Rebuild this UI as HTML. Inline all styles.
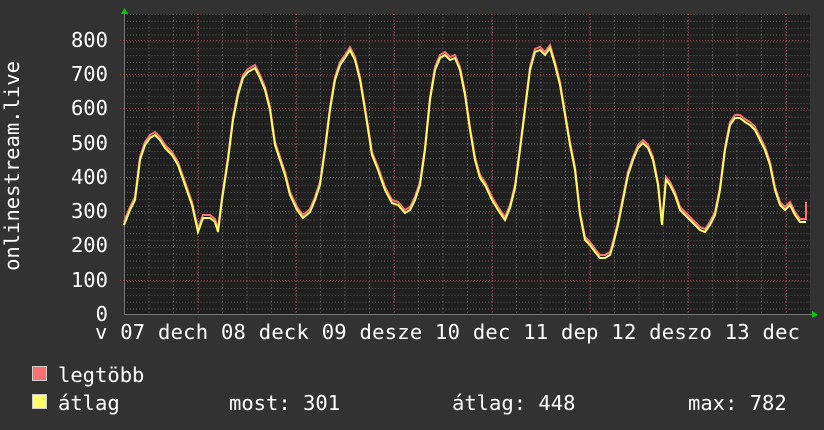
<!DOCTYPE html><html><head><style>body{margin:0;background:#323232}svg{display:block}text{font-family:"DejaVu Sans Mono","Liberation Mono",monospace;fill:#fff}</style></head><body>
<svg width="824" height="430" xmlns="http://www.w3.org/2000/svg">
<defs>
<pattern id="minor" x="124" y="14" width="24.5" height="6.85" patternUnits="userSpaceOnUse">
<line x1="0.5" y1="0" x2="0.5" y2="6.85" stroke="#666" stroke-width="1" stroke-dasharray="1,2"/>
<line x1="0" y1="0.5" x2="24.5" y2="0.5" stroke="#555" stroke-width="1" stroke-dasharray="1,2"/>
</pattern>
</defs>
<rect x="0" y="0" width="824" height="430" fill="#323232"/>
<rect x="124" y="14" width="686" height="300" fill="#1f1f1f"/>
<rect x="124" y="14" width="686" height="300" fill="url(#minor)"/>
<g stroke="#8a3a3a" stroke-dasharray="1,2">
<line x1="198.5" y1="14" x2="198.5" y2="318"/><line x1="296.5" y1="14" x2="296.5" y2="318"/><line x1="394.5" y1="14" x2="394.5" y2="318"/><line x1="492.5" y1="14" x2="492.5" y2="318"/><line x1="590.5" y1="14" x2="590.5" y2="318"/><line x1="688.5" y1="14" x2="688.5" y2="318"/><line x1="786.5" y1="14" x2="786.5" y2="318"/>
<line x1="120" y1="40.5" x2="810" y2="40.5"/><line x1="120" y1="74.5" x2="810" y2="74.5"/><line x1="120" y1="108.5" x2="810" y2="108.5"/><line x1="120" y1="143.5" x2="810" y2="143.5"/><line x1="120" y1="177.5" x2="810" y2="177.5"/><line x1="120" y1="211.5" x2="810" y2="211.5"/><line x1="120" y1="245.5" x2="810" y2="245.5"/><line x1="120" y1="280.5" x2="810" y2="280.5"/>
</g>
<line x1="124" y1="314.5" x2="816" y2="314.5" stroke="#777"/>
<line x1="124.5" y1="10" x2="124.5" y2="314" stroke="#777"/>
<polygon points="121,14 128,14 124.5,8" fill="#0c0"/>
<polygon points="812,311 812,318 818,314.5" fill="#0c0"/>
<g fill="none" stroke-width="2" stroke-linejoin="miter">
<polyline transform="translate(0,-3)" stroke="#ff7070" points="124,225 130,210 135,200 140,160 145,145 150,138 155,135 160,140 165,148 172,155 178,165 185,185 192,205 198,232 203,218 210,218 215,222 218,232 222,200 228,160 233,120 238,95 243,78 248,72 255,68 260,78 265,90 270,110 275,145 280,160 285,175 290,195 297,210 303,218 310,212 315,200 320,185 325,150 330,110 335,80 340,65 345,58 350,50 355,60 360,80 365,110 372,155 378,170 385,190 392,203 398,205 405,213 410,210 415,200 420,185 425,150 430,100 435,70 440,58 445,55 450,60 455,58 460,70 465,95 470,130 475,160 480,178 485,185 492,200 498,210 505,220 510,208 515,188 520,150 525,110 530,70 535,52 540,50 545,55 550,48 555,65 560,85 565,115 570,145 575,170 580,215 585,240 590,245 595,252 600,258 605,258 610,255 613,245 618,225 623,200 628,175 633,160 638,148 643,143 648,148 653,160 658,185 662,225 666,180 670,185 675,195 680,210 688,218 695,225 700,230 705,232 710,225 715,215 720,190 725,150 730,125 735,118 740,118 745,122 750,125 755,130 760,140 765,150 770,165 775,190 780,205 785,210 790,205 795,215 800,222 806,222 806,205"/>
<polyline stroke="#ffff66" points="124,225 130,210 135,200 140,160 145,145 150,138 155,135 160,140 165,148 172,155 178,165 185,185 192,205 198,232 203,218 210,218 215,222 218,232 222,200 228,160 233,120 238,95 243,78 248,72 255,68 260,78 265,90 270,110 275,145 280,160 285,175 290,195 297,210 303,218 310,212 315,200 320,185 325,150 330,110 335,80 340,65 345,58 350,50 355,60 360,80 365,110 372,155 378,170 385,190 392,203 398,205 405,213 410,210 415,200 420,185 425,150 430,100 435,70 440,58 445,55 450,60 455,58 460,70 465,95 470,130 475,160 480,178 485,185 492,200 498,210 505,220 510,208 515,188 520,150 525,110 530,70 535,52 540,50 545,55 550,48 555,65 560,85 565,115 570,145 575,170 580,215 585,240 590,245 595,252 600,258 605,258 610,255 613,245 618,225 623,200 628,175 633,160 638,148 643,143 648,148 653,160 658,185 662,225 666,180 670,185 675,195 680,210 688,218 695,225 700,230 705,232 710,225 715,215 720,190 725,150 730,125 735,118 740,118 745,122 750,125 755,130 760,140 765,150 770,165 775,190 780,205 785,210 790,205 795,215 800,222 806,222"/>
</g>
<g font-size="20.5" text-anchor="end">
<text x="108" y="47">800</text><text x="108" y="81">700</text><text x="108" y="115">600</text><text x="108" y="150">500</text><text x="108" y="184">400</text><text x="108" y="218">300</text><text x="108" y="252">200</text><text x="108" y="287">100</text><text x="108" y="321">0</text>
</g>
<text x="95" y="339" font-size="20.5" textLength="705" lengthAdjust="spacing">v 07 dech 08 deck 09 desze 10 dec 11 dep 12 deszo 13 dec</text>
<text transform="translate(19,166) rotate(-90)" font-size="20.5" text-anchor="middle">onlinestream.live</text>
<rect x="32.5" y="366.5" width="14" height="14" fill="#ff7070" stroke="#ccc"/>
<rect x="32.5" y="394.5" width="14" height="14" fill="#ffff66" stroke="#ccc"/>
<g font-size="20.5">
<text x="58" y="382">legtöbb</text>
<text x="58" y="410">átlag</text>
<text x="229" y="410">most: 301</text>
<text x="452" y="410">átlag: 448</text>
<text x="688" y="410">max: 782</text>
</g>
</svg>
</body></html>
